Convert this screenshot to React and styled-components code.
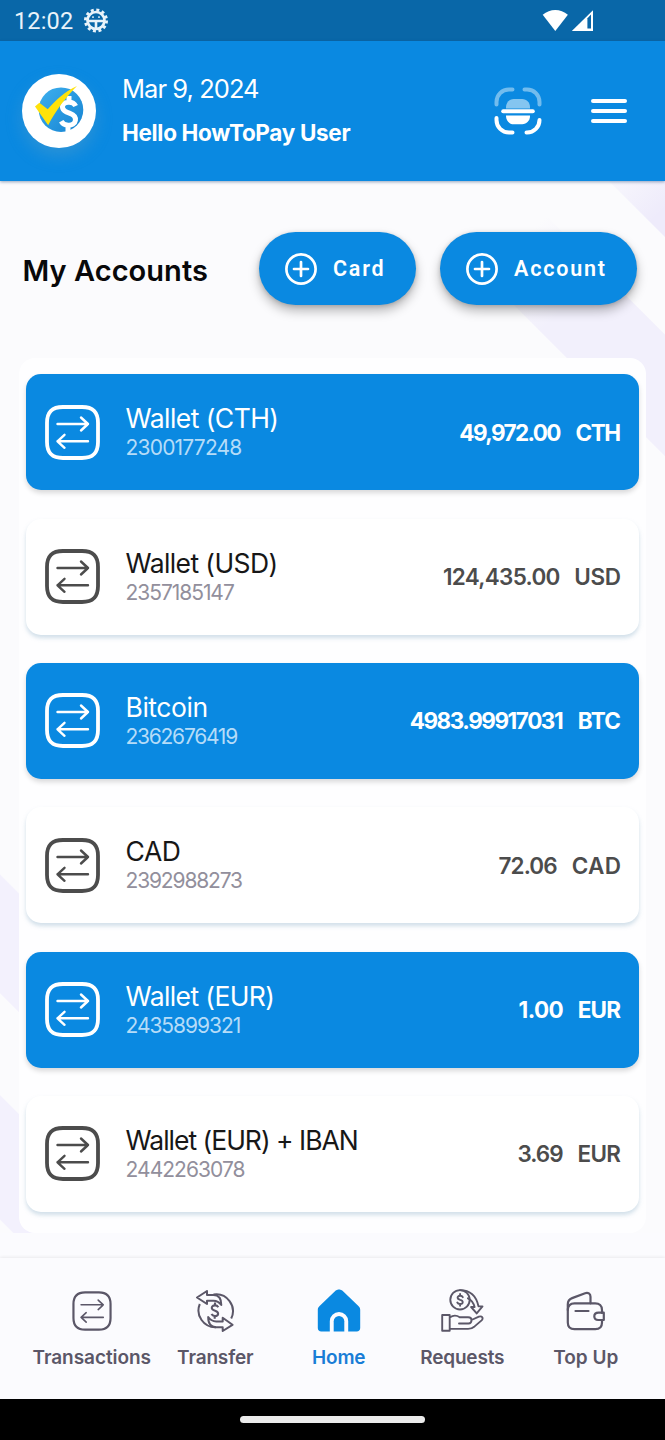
import React from 'react';
import styled, { createGlobalStyle } from 'styled-components';

const blue = '#0a89e1';
const muted = '#5b5768';

const GlobalStyle = createGlobalStyle`
  * { box-sizing: border-box; }
  body { margin: 0; background: #fbfbfe; font-family: Inter, "Open Sans", sans-serif; }
`;

const Screen = styled.div`
  width: 665px;
  height: 1440px;
  display: flex;
  flex-direction: column;
  overflow: hidden;
`;

const StatusBar = styled.div`
  height: 41px;
  flex: none;
  display: flex;
  align-items: center;
  background: #0967a8;
  color: #e9f3fa;
  padding: 1px 71px 0 14px;
  font: 400 23.5px/1 Roboto, sans-serif;
`;
const Clock = styled.span`
  letter-spacing: 0.15px;
  margin: 2px 10px 0 0;
`;
const Signals = styled.div`
  margin: -2px 0 0 auto;
  display: flex;
  gap: 2px;
`;

const Header = styled.header`
  height: 140px;
  flex: none;
  display: flex;
  align-items: center;
  background: ${blue};
  color: #fff;
  padding: 0 38px 0 22px;
  position: relative;
  box-shadow: 0 1px 3px rgba(20, 60, 110, 0.45);
`;
const Avatar = styled.div`
  width: 74px;
  height: 74px;
  border-radius: 50%;
  background: #fff;
  box-shadow: 0 8px 16px rgba(90, 160, 200, 0.4);
`;
const Greeting = styled.div`
  display: flex;
  flex-direction: column;
  margin: 0 auto 1px 26px;
`;
const DateText = styled.span`
  font-size: 25.5px;
  line-height: 44px;
  letter-spacing: -0.95px;
`;
const HelloText = styled.span`
  font-size: 22.5px;
  line-height: 44px;
  font-weight: 700;
  letter-spacing: -0.32px;
`;
const HeaderActions = styled.div`
  display: flex;
  align-items: center;
  gap: 49px;
`;
const MenuLines = styled.div`
  display: flex;
  flex-direction: column;
  gap: 6px;
`;
const MenuLine = styled.div`
  width: 36px;
  height: 4px;
  border-radius: 2px;
  background: #fff;
`;

const Content = styled.main`
  height: 1052px;
  flex: none;
  display: flex;
  flex-direction: column;
  padding: 51px 19px 0;
  background:
    linear-gradient(135deg, #fbfbfd 410px, rgba(251, 251, 253, 0) 490px),
    linear-gradient(
      45deg,
      #fbfbfd 9px, #f3f1fd 10px, #f3f1fd 97px, #fbfbfd 98px,
      #fbfbfd 169px, #f3f1fd 170px, #f3f1fd 253px, #fbfbfd 254px,
      #fbfbfd 1019px, #f2f0fc 1020px, #f2f0fc 1105px, #fbfbfd 1106px,
      #fbfbfd 1174px, #eeebfb 1175px
    );
`;
const TitleRow = styled.div`
  height: 73px;
  display: flex;
  align-items: center;
  padding: 0 9px 0 3.5px;
  gap: 24px;
`;
const Title = styled.h1`
  margin: 4px auto 0 0;
  font-size: 29px;
  font-weight: 600;
  color: #08080a;
  letter-spacing: ${(p) => p.$track}px;
  white-space: nowrap;
`;
const PillButton = styled.button`
  width: ${(p) => p.$width}px;
  height: 73px;
  border: 0;
  border-radius: 37px;
  display: flex;
  align-items: center;
  gap: 16px;
  padding: 0 0 0 26px;
  background: ${blue};
  color: #fff;
  font: 600 21.5px/1 Roboto, sans-serif;
  letter-spacing: 1.8px;
  box-shadow: 0 6px 11px rgba(0, 0, 0, 0.27), 0 1px 4px rgba(0, 0, 0, 0.16);
`;

const Panel = styled.section`
  margin-top: 53px;
  height: 875px;
  width: 627px;
  border-radius: 16px;
  background: #fefeff;
  padding: 16.4px 7px 0;
  display: flex;
  flex-direction: column;
  gap: 28.3px;
`;
const AccountRow = styled.article`
  height: 116px;
  flex: none;
  border-radius: 15px;
  display: flex;
  align-items: center;
  padding: 0 18px 0 19px;
  background: ${(p) => (p.$active ? blue : '#fff')};
  color: ${(p) => (p.$active ? '#fff' : '#4c4c4c')};
  box-shadow: ${(p) => (p.$active
    ? '0 3px 5px rgba(0, 0, 0, 0.15)'
    : '0 3px 4px rgba(130, 170, 195, 0.36)')};
`;
const AccountText = styled.div`
  display: flex;
  flex-direction: column;
  margin: 0 auto 0 25.5px;
`;
const AccountName = styled.span`
  font-size: 26.5px;
  line-height: 31px;
  letter-spacing: ${(p) => p.$track}px;
  color: ${(p) => (p.$active ? '#fff' : '#171717')};
`;
const AccountNumber = styled.span`
  font-size: 21px;
  line-height: 27px;
  letter-spacing: ${(p) => p.$track}px;
  color: ${(p) => (p.$active ? '#b5dcf8' : '#928f9c')};
`;
const Amount = styled.div`
  display: flex;
  gap: 14px;
  font-size: 22.5px;
  font-weight: ${(p) => (p.$active ? 700 : 600)};
`;
const Value = styled.span`
  letter-spacing: ${(p) => p.$track}px;
  margin-right: ${(p) => -p.$track}px;
`;

const BottomNav = styled.nav`
  margin-top: 25px;
  height: 141px;
  flex: none;
  display: flex;
  padding: 0 17.5px 0 30px;
  background: #fbfbfe;
  box-shadow: 0 -1px 3px rgba(0, 0, 0, 0.07);
`;
const NavItem = styled.div`
  flex: 1;
  display: flex;
  flex-direction: column;
  align-items: center;
  padding-top: 31px;
  color: ${(p) => (p.$active ? blue : muted)};
`;
const NavIcon = styled.div`
  height: 43px;
  display: flex;
  align-items: center;
`;
const NavLabel = styled.span`
  margin-top: 14px;
  font-size: 19px;
  line-height: 24px;
  font-weight: 600;
  letter-spacing: ${(p) => p.$track}px;
  color: ${(p) => (p.$active ? '#197dd6' : muted)};
`;
const GestureBar = styled.div`
  flex: 1;
  background: #000;
  display: flex;
  justify-content: center;
  align-items: center;
`;
const GesturePill = styled.div`
  width: 185px;
  height: 7.5px;
  border-radius: 4px;
  background: #ebebeb;
`;

const GearIcon = () => (
  <svg width="26" height="26" viewBox="0 0 26 26" fill="none" stroke="currentColor">
    <circle cx="13" cy="12.500" r="8.500" strokeWidth="2.700" />
    <circle cx="13" cy="12.500" r="10.600" strokeWidth="2.800" strokeDasharray="2.950 2.600" />
    <path d="M5 13h16M13 13v8" strokeWidth="2.600" />
    <path d="M10 8.200v1.800M16 8.200v1.800" strokeWidth="1.500" />
  </svg>
);

const WifiIcon = () => (
  <svg width="27" height="24" viewBox="0 0 27 24" fill="#fff">
    <path d="M13.300 23 .7 6.800C4.500 3.700 8.800 2 13.300 2s8.800 1.700 12.600 4.800Z" />
  </svg>
);

const CellIcon = () => (
  <svg width="23" height="24" viewBox="0 0 23 24">
    <path d="M.8 23 22 2.200V23Z" fill="#fff" />
    <path d="M16.400 10.200 20 6.600v14h-3.600Z" fill="#0967a8" />
  </svg>
);

const Logo = () => (
  <svg width="74" height="74" viewBox="0 0 74 74">
    <defs>
      <linearGradient id="coin" x1="0" y1="0" x2="1" y2="1">
        <stop offset="0" stopColor="#3eb0ee" />
        <stop offset="1" stopColor="#1583d2" />
      </linearGradient>
    </defs>
    <circle cx="39" cy="35.700" r="22.300" fill="url(#coin)" />
    <path
      d="M53.700 32c-1.500-3-4.400-4-7.400-3.800-4.300.3-6.500 3-5.600 6 .9 3 4 4 7.200 5.200 3.800 1.400 6 3.400 5.500 7-.5 3.400-3.800 5.200-7.400 4.900-3.200-.3-5.500-1.800-6.800-4.100M47 22v6M46 51v7.500"
      fill="none" stroke="#fff" strokeWidth="5"
    />
    <path d="m13 32.500 4.400-3.700 8.300 6.500C33.500 26.500 42.500 17.700 55 12 44.600 22.500 33.500 36.500 26.200 51.300Z" fill="#ffe20a" />
  </svg>
);

const ScanIcon = () => (
  <svg width="48" height="48" viewBox="0 0 48 48" fill="none" strokeWidth="4" strokeLinecap="round">
    <path d="M2.500 17.500V15C2.500 8 8 2.500 15 2.500h3.500M30.500 2.500H33c7 0 12.500 5.500 12.500 12.500v2.500" stroke="#72bcee" />
    <path d="M2.500 31v2c0 7 5.500 12.500 12.500 12.500h3.500M32.500 45.500h.5c7 0 12.500-5.500 12.500-12.500" stroke="#fff" />
    <path d="M12 21.500v-1.200c0-4.700 3.100-8.300 7.800-8.300h8.400c4.700 0 7.800 3.600 7.800 8.300v1.200Z" fill="#84c5f0" />
    <path d="M12 28.500v.6c0 4.600 3.300 8.100 7.800 8.100h8.400c4.500 0 7.800-3.500 7.800-8.100v-.6Z" fill="#fff" />
    <path d="M9.200 24.200h29.600" stroke="#fff" />
  </svg>
);

const PlusCircle = () => (
  <svg width="32" height="32" viewBox="0 0 32 32" fill="none" stroke="#fff" strokeWidth="2.700" strokeLinecap="round">
    <circle cx="16" cy="16" r="14.600" />
    <path d="M16 9v14M9 16h14" />
  </svg>
);

const ExchangeIcon = ({ size, frame, line }) => (
  <svg width={size} height={size} viewBox="0 0 55 55" fill="none" stroke="currentColor" strokeLinecap="round" strokeLinejoin="round">
    <path
      d="M18 2h19c11 0 16 5 16 16v19c0 11-5 16-16 16H18C7 53 2 48 2 37V18C2 7 7 2 18 2Z"
      strokeWidth={frame}
    />
    <path d="M12.500 19H43M36 12.500l7 6.500-7 6.500M43 36.300H12.500M19.500 29.800l-7 6.500 7 6.500" strokeWidth={line} />
  </svg>
);

const TransferIcon = () => (
  <svg width="42" height="42" viewBox="0 0 42 42" fill="none" stroke="currentColor" strokeWidth="2" strokeLinejoin="round">
    <path d="M5.800 14A16.800 16.800 0 0 0 22 37.200M37.200 28.500A16.800 16.800 0 0 0 19.500 4.600" />
    <path d="M3 7.500 13 1v4h6.500c5 0 7.800 3 7.800 10-2.300-3.200-4.400-4.200-7.800-4.200H13V14Z" />
    <path d="M38.500 34.800 28.700 41v-3.800H22c-5 0-7.800-3.200-7.800-10.200 2.300 3.300 4.600 4.400 8 4.400h6.500v-3.600Z" />
    <path d="M24.300 17.300c-.8-1.400-2-2-3.500-1.900-2 .1-3.200 1.200-3 2.700.2 1.600 1.700 2.100 3.300 2.600 1.900.6 3.200 1.400 3 3.200-.2 1.500-1.600 2.300-3.300 2.200-1.500-.1-2.600-.7-3.300-2M21 12.600v3M20.700 26v2.700" strokeWidth="2.100" />
  </svg>
);

const HomeIcon = () => (
  <svg width="44" height="43" viewBox="0 0 44 43">
    <path
      d="M18.200 2.100c2.300-2 5.300-2 7.600 0l15.600 15c1.300 1.200 1.800 2.300 1.800 4V39c0 2.200-1.400 3.500-3.500 3.500h-8.500V32.300a9.200 9.200 0 0 0-18.400 0v10.200H4.300c-2.100 0-3.500-1.300-3.500-3.500V21.100c0-1.700.5-2.800 1.800-4Z"
      fill={blue}
    />
    <path d="M16.700 42.500V32.300a5.300 5.300 0 0 1 10.600 0v10.200Z" fill={blue} />
  </svg>
);

const RequestsIcon = () => (
  <svg width="43" height="43" viewBox="0 0 43 43" fill="none" stroke="currentColor" strokeWidth="1.900" strokeLinejoin="round" strokeLinecap="round">
    <circle cx="19" cy="10.800" r="9.700" />
    <path d="M19 1.100c10 0 16.300 5.700 18.500 16.300h4l-5.800 7-5.600-6.400h3.500c-1-4-3-7-6.700-8.700" />
    <path d="M21.800 8.200c-.5-1-1.500-1.500-2.800-1.400-1.600.1-2.500.9-2.400 2 .1 1.200 1.300 1.600 2.600 2 1.500.4 2.600 1.100 2.500 2.400-.1 1.200-1.200 1.900-2.700 1.800-1.200 0-2.200-.5-2.700-1.500M19.100 5v1.800M19.100 15v1.800" strokeWidth="1.900" />
    <path d="M1.200 26h7.500v15.700H1.200ZM8.700 28.500c3.400-2.400 6.800-2.500 10-.2h8.500c2.300 0 3.300 1.300 3.300 2.700l7.400-3.300c3.300-1.200 4.700 1.600 2.700 3.700l-7 6c-2 1.600-3.700 2.500-6.500 2.500H8.700M18 34.500h9.500c2 0 3-1.200 3-3.500" />
  </svg>
);

const WalletIcon = () => (
  <svg width="40" height="42" viewBox="0 0 40 42" fill="none" stroke="currentColor" strokeWidth="2.200" strokeLinecap="round" strokeLinejoin="round">
    <path d="M36 23v-3c0-4.300-2.600-6.700-6.800-6.700H8.500c-4.300 0-6.700 2.400-6.700 6.700v12.500c0 4.300 2.400 6.700 6.700 6.700h20.700c4.200 0 6.800-2.400 6.800-6.700V30" />
    <path d="M1.800 20v-5.800c0-3.100 1.400-5 4.300-6.100l13-4.900c3-1.100 5.400.6 5.400 3.600v6.500" />
    <path d="M37.800 22.700h-5.300c-3.200 0-4.200 1.700-4.200 3.600 0 2.100 1.500 3.700 3.900 3.700h5.600ZM9.500 21h13" />
  </svg>
);

const accounts = [
  { name: 'Wallet (CTH)', number: '2300177248', value: '49,972.00', code: 'CTH', tracks: [-0.55, -0.8, -1.6, -1.5] },
  { name: 'Wallet (USD)', number: '2357185147', value: '124,435.00', code: 'USD', tracks: [-0.6, -1.05, -0.7, -0.4] },
  { name: 'Bitcoin', number: '2362676419', value: '4983.99917031', code: 'BTC', tracks: [-0.45, -1.25, -1.45, -0.6] },
  { name: 'CAD', number: '2392988273', value: '72.06', code: 'CAD', tracks: [-0.4, -1.15, -0.85, 0.3] },
  { name: 'Wallet (EUR)', number: '2435899321', value: '1.00', code: 'EUR', tracks: [-0.6, -1.05, -0.6, -0.8] },
  { name: 'Wallet (EUR) + IBAN', number: '2442263078', value: '3.69', code: 'EUR', tracks: [-1, -0.95, -1, -0.7] },
];

const navItems = [
  { label: 'Transactions', icon: <ExchangeIcon size={40} frame={3} line={2.2} />, track: -0.05 },
  { label: 'Transfer', icon: <TransferIcon />, track: -0.15 },
  { label: 'Home', icon: <HomeIcon />, track: -0.2, active: true },
  { label: 'Requests', icon: <RequestsIcon />, track: -0.2 },
  { label: 'Top Up', icon: <WalletIcon />, track: 0 },
];

export default function App() {
  return (
    <Screen>
      <GlobalStyle />
      <StatusBar>
        <Clock>12:02</Clock>
        <GearIcon />
        <Signals>
          <WifiIcon />
          <CellIcon />
        </Signals>
      </StatusBar>
      <Header>
        <Avatar><Logo /></Avatar>
        <Greeting>
          <DateText>Mar 9, 2024</DateText>
          <HelloText>Hello HowToPay User</HelloText>
        </Greeting>
        <HeaderActions>
          <ScanIcon />
          <MenuLines>
            <MenuLine />
            <MenuLine />
            <MenuLine />
          </MenuLines>
        </HeaderActions>
      </Header>
      <Content>
        <TitleRow>
          <Title $track={0.05}>My Accounts</Title>
          <PillButton $width={157}><PlusCircle />Card</PillButton>
          <PillButton $width={197}><PlusCircle />Account</PillButton>
        </TitleRow>
        <Panel>
          {accounts.map((a, i) => {
            const active = i % 2 === 0;
            return (
              <AccountRow key={a.number} $active={active}>
                <ExchangeIcon size={55} frame={3.8} line={2.4} />
                <AccountText>
                  <AccountName $active={active} $track={a.tracks[0]}>{a.name}</AccountName>
                  <AccountNumber $active={active} $track={a.tracks[1]}>{a.number}</AccountNumber>
                </AccountText>
                <Amount $active={active}>
                  <Value $track={a.tracks[2]}>{a.value}</Value>
                  <Value $track={a.tracks[3]}>{a.code}</Value>
                </Amount>
              </AccountRow>
            );
          })}
        </Panel>
      </Content>
      <BottomNav>
        {navItems.map((item) => (
          <NavItem key={item.label} $active={item.active}>
            <NavIcon>{item.icon}</NavIcon>
            <NavLabel $active={item.active} $track={item.track}>{item.label}</NavLabel>
          </NavItem>
        ))}
      </BottomNav>
      <GestureBar><GesturePill /></GestureBar>
    </Screen>
  );
}
